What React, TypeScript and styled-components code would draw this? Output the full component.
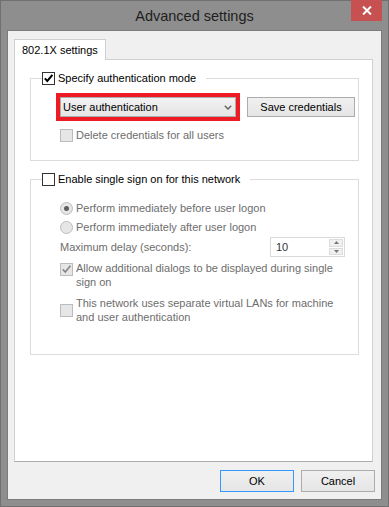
import React from 'react';
import styled, { createGlobalStyle } from 'styled-components';

const GlobalStyle = createGlobalStyle`
  html, body {
    margin: 0;
    padding: 0;
    background: #fff;
  }
  body {
    font-family: 'Liberation Sans', Arial, sans-serif;
    font-size: 11px;
    color: #000;
  }
`;

const Window = styled.div`
  box-sizing: border-box;
  width: 389px;
  height: 507px;
  background: #8e8e8e;
  border: 1px solid #707070;
  display: flex;
  flex-direction: column;
`;

const TitleBar = styled.div`
  flex: none;
  height: 29px;
  display: grid;
  grid-template-columns: 1fr auto 1fr;
  align-items: center;
`;

const Title = styled.div`
  grid-column: 2;
  font-size: 14.5px;
  color: #1e1e1e;
`;

const CloseButton = styled.div`
  grid-column: 3;
  justify-self: end;
  align-self: start;
  width: 31px;
  height: 21px;
  margin: -1px 6px 0 0;
  background: #c75050;
  display: flex;
  align-items: center;
  justify-content: center;
`;

const Client = styled.div`
  flex: 1;
  margin: 0 6px 6px;
  border: 1px solid #7b7b7b;
  background: #f0f0f0;
  padding: 8px 6px 7px;
  display: flex;
  flex-direction: column;
`;

const TabStrip = styled.div`
  display: flex;
  flex: none;
`;

const Tab = styled.div`
  box-sizing: border-box;
  position: relative;
  z-index: 1;
  width: 92px;
  height: 21px;
  margin-bottom: -1px;
  padding-left: 7px;
  line-height: 20px;
  background: #fff;
  border: 1px solid #d0d0d0;
  border-bottom: none;
  white-space: nowrap;
`;

const Panel = styled.div`
  flex: 1;
  margin-right: 2px;
  background: #fff;
  border: 1px solid #d0d0d0;
  border-bottom-color: #adadad;
  padding: 11px 13px 0 15px;
  display: flex;
  flex-direction: column;
  gap: 11px;
`;

const Group = styled.fieldset`
  margin: 0;
  padding: 0;
  min-width: 0;
  border: 1px solid #dcdcdc;
`;

const Legend = styled.legend`
  margin-left: 11px;
  padding: 0 10px 0 0;
  height: 15px;
  display: flex;
  align-items: center;
  gap: 3px;
  line-height: 15px;
  white-space: nowrap;
`;

const GroupBody = styled.div<{ $top: number; $bottom: number }>`
  display: flex;
  flex-direction: column;
  padding: ${p => p.$top}px 0 ${p => p.$bottom}px 29px;
`;

const ComboRow = styled.div`
  display: flex;
  align-items: center;
  gap: 11px;
  height: 20px;
`;

const Combo = styled.div`
  box-sizing: border-box;
  width: 176px;
  height: 20px;
  padding: 0 3px 0 2px;
  border: 1px solid #acacac;
  background: linear-gradient(#f2f2f2, #e5e5e5);
  outline: 4px solid #ed1c24;
  display: flex;
  align-items: center;
  justify-content: space-between;
`;

const PushButton = styled.div<{ $width: number; $height: number; $default?: boolean }>`
  box-sizing: border-box;
  width: ${p => p.$width}px;
  height: ${p => p.$height}px;
  border: 1px solid ${p => (p.$default ? '#3399ff' : '#acacac')};
  background: linear-gradient(#f0f0f0, #e5e5e5);
  display: flex;
  align-items: center;
  justify-content: center;
  white-space: nowrap;
`;

const OptionRow = styled.div<{ $mt?: number; $align?: string; $disabled?: boolean }>`
  display: flex;
  align-items: ${p => p.$align || 'center'};
  gap: 3px;
  margin-top: ${p => p.$mt || 0}px;
  line-height: 15px;
  color: ${p => (p.$disabled ? '#6d6d6d' : '#000')};
  white-space: nowrap;
`;

const Wrapped = styled.span`
  line-height: 14px;
`;

const Box = styled.span<{ $round?: boolean; $disabled?: boolean; $mt?: number }>`
  box-sizing: border-box;
  flex: none;
  width: 13px;
  height: 13px;
  margin-top: ${p => p.$mt || 0}px;
  border: 1px solid ${p => (p.$disabled ? '#bcbcbc' : '#333')};
  border-radius: ${p => (p.$round ? '50%' : '0')};
  background: ${p => (p.$disabled ? '#e6e6e6' : '#fff')};
  display: flex;
  align-items: center;
  justify-content: center;
`;

const Dot = styled.span`
  width: 5px;
  height: 5px;
  border-radius: 50%;
  background: #5e5e5e;
`;

const DelayRow = styled.div`
  display: flex;
  align-items: center;
  height: 20px;
  margin-top: 2px;
  color: #6d6d6d;
`;

const DelayLabel = styled.span`
  width: 210px;
`;

const Spin = styled.div`
  box-sizing: border-box;
  width: 75px;
  height: 20px;
  border: 1px solid #d9d9d9;
  background: #fff;
  display: flex;
`;

const SpinValue = styled.span`
  flex: 1;
  padding-left: 5px;
  line-height: 18px;
  color: #333;
`;

const SpinButtons = styled.div`
  width: 14px;
  margin: 1px 1px 1px 0;
  display: flex;
  flex-direction: column;
  gap: 1px;
`;

const SpinButton = styled.div`
  flex: 1;
  background: #f0f0f0;
  border: 1px solid #dcdcdc;
  display: flex;
  align-items: center;
  justify-content: center;
`;

const ButtonRow = styled.div`
  flex: none;
  display: flex;
  justify-content: flex-end;
  gap: 7px;
  margin-top: 8px;
`;

const Check = ({ disabled }: { disabled?: boolean }) => (
  <svg width="11" height="11" viewBox="0 0 11 11">
    <path
      d="M1.8 5.4 L4.3 8 L9.4 1.8"
      fill="none"
      stroke={disabled ? '#848484' : '#000'}
      strokeWidth={disabled ? 1.6 : 2}
    />
  </svg>
);

interface CheckBoxProps {
  checked?: boolean;
  disabled?: boolean;
  round?: boolean;
  mt?: number;
}

const CheckBox = ({ checked, disabled, round, mt }: CheckBoxProps) => (
  <Box $round={round} $disabled={disabled} $mt={mt}>
    {checked && (round ? <Dot /> : <Check disabled={disabled} />)}
  </Box>
);

const App = () => {
  return (
    <>
      <GlobalStyle />
      <Window>
        <TitleBar>
          <Title>Advanced settings</Title>
          <CloseButton>
            <svg width="10" height="9" viewBox="0 0 10 9">
              <path d="M1 0.5 L9 8.5 M9 0.5 L1 8.5" stroke="#fff" strokeWidth="2" />
            </svg>
          </CloseButton>
        </TitleBar>
        <Client>
          <TabStrip>
            <Tab>802.1X settings</Tab>
          </TabStrip>
          <Panel>
            <Group>
              <Legend>
                <CheckBox checked />
                Specify authentication mode
              </Legend>
              <GroupBody $top={11} $bottom={17}>
                <ComboRow>
                  <Combo>
                    User authentication
                    <svg width="8" height="5" viewBox="0 0 8 5">
                      <path d="M0.8 0.8 L4 4 L7.2 0.8" fill="none" stroke="#666" strokeWidth="1.5" />
                    </svg>
                  </Combo>
                  <PushButton $width={108} $height={20}>Save credentials</PushButton>
                </ComboRow>
                <OptionRow $mt={11} $disabled>
                  <CheckBox disabled />
                  Delete credentials for all users
                </OptionRow>
              </GroupBody>
            </Group>
            <Group>
              <Legend>
                <CheckBox />
                Enable single sign on for this network
              </Legend>
              <GroupBody $top={14} $bottom={30}>
                <OptionRow $disabled>
                  <CheckBox round disabled checked />
                  Perform immediately before user logon
                </OptionRow>
                <OptionRow $mt={4} $disabled>
                  <CheckBox round disabled />
                  Perform immediately after user logon
                </OptionRow>
                <DelayRow>
                  <DelayLabel>Maximum delay (seconds):</DelayLabel>
                  <Spin>
                    <SpinValue>10</SpinValue>
                    <SpinButtons>
                      <SpinButton>
                        <svg width="5" height="3" viewBox="0 0 5 3">
                          <path d="M0 3 L2.5 0 L5 3 Z" fill="#777" />
                        </svg>
                      </SpinButton>
                      <SpinButton>
                        <svg width="5" height="3" viewBox="0 0 5 3">
                          <path d="M0 0 L2.5 3 L5 0 Z" fill="#777" />
                        </svg>
                      </SpinButton>
                    </SpinButtons>
                  </Spin>
                </DelayRow>
                <OptionRow $mt={4} $align="flex-start" $disabled>
                  <CheckBox disabled checked mt={2} />
                  <Wrapped>
                    Allow additional dialogs to be displayed during single
                    <br />
                    sign on
                  </Wrapped>
                </OptionRow>
                <OptionRow $mt={7} $disabled>
                  <CheckBox disabled />
                  <Wrapped>
                    This network uses separate virtual LANs for machine
                    <br />
                    and user authentication
                  </Wrapped>
                </OptionRow>
              </GroupBody>
            </Group>
          </Panel>
          <ButtonRow>
            <PushButton $width={74} $height={22} $default>OK</PushButton>
            <PushButton $width={74} $height={22}>Cancel</PushButton>
          </ButtonRow>
        </Client>
      </Window>
    </>
  );
};

export default App;
